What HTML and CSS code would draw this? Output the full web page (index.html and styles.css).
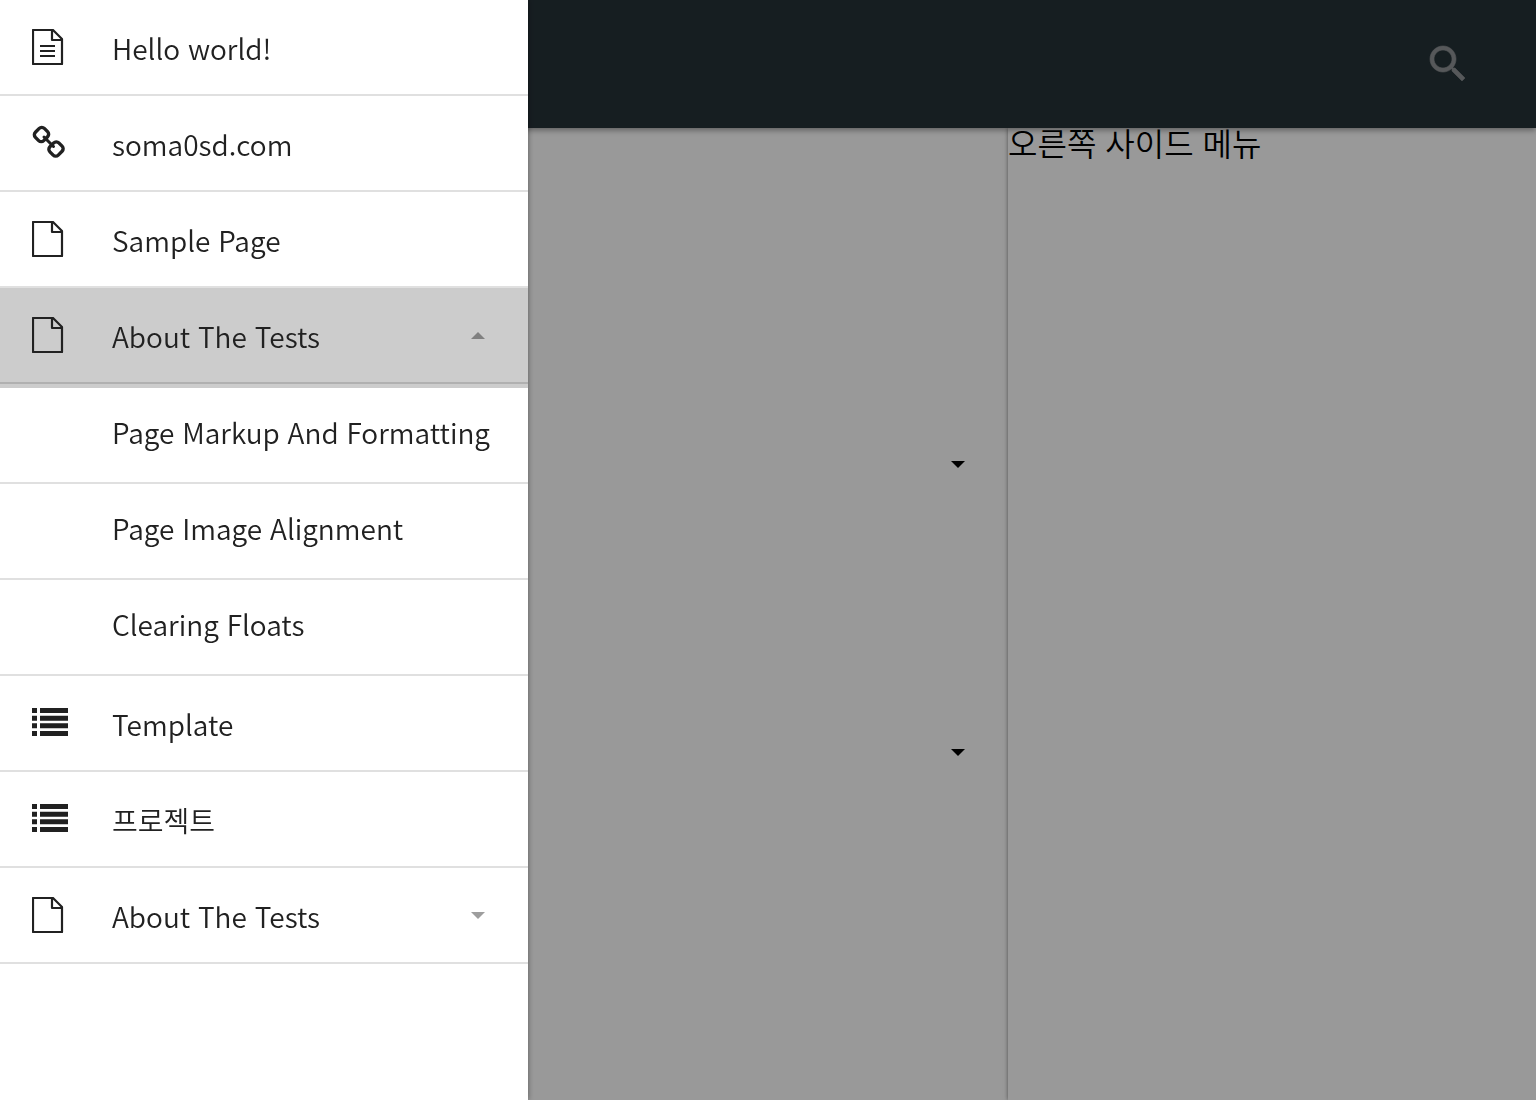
FILE: index.html
```
<!DOCTYPE html>
<html lang="ko">
<head>
  <meta charset="UTF-8">
  <meta name="viewport" content="width=device-width, initial-scale=1.0">
  <title>soma0sd</title>
  <link rel="stylesheet" href="styles.css">
</head>
<body>
  <!-- icon set -->
  <svg class="sprite" aria-hidden="true">
    <symbol id="icon-page" viewBox="0 0 36 36">
      <path d="M1 1h20l9 9v25H1z M20 1v10h10" fill="none" stroke="currentColor" stroke-width="2.2" stroke-linejoin="round"/>
    </symbol>
    <symbol id="icon-post" viewBox="0 0 36 36">
      <path d="M1 1h20l9 9v25H1z M20 1v10h10 M8 17h15 M8 22h15 M8 27h15" fill="none" stroke="currentColor" stroke-width="2.2" stroke-linejoin="round"/>
    </symbol>
    <symbol id="icon-link" viewBox="0 0 36 36">
      <g fill="none" stroke="currentColor" stroke-width="3.4">
        <rect x="3.200" y="3.600" width="12.600" height="11.800" rx="3.600" transform="rotate(-45 9.500 9.500)"/>
        <rect x="17.700" y="18.100" width="12.600" height="11.800" rx="3.600" transform="rotate(-45 24 24)"/>
        <path d="M12 12l9.500 9.500" stroke-width="3" stroke-linecap="round"/>
      </g>
    </symbol>
    <symbol id="icon-list" viewBox="0 0 36 36">
      <path d="M0 3h5v5H0z M8 3h28v5H8z M0 10.700h5v5H0z M8 10.700h28v5H8z M0 18.300h5v5H0z M8 18.300h28v5H8z M0 26h5v5H0z M8 26h28v5H8z" fill="currentColor"/>
    </symbol>
    <symbol id="icon-search" viewBox="0 0 24 24">
      <path d="M15.500 14h-.79l-.28-.27C15.410 12.590 16 11.110 16 9.500 16 5.910 13.090 3 9.500 3S3 5.910 3 9.500 5.910 16 9.500 16c1.610 0 3.090-.59 4.230-1.570l.27.28v.79l5 4.990L20.490 19l-4.990-5zm-6 0C7.010 14 5 11.990 5 9.500S7.010 5 9.500 5 14 7.010 14 9.500 11.990 14 9.500 14z" fill="currentColor" stroke="currentColor" stroke-width=".3"/>
    </symbol>
  </svg>

  <div class="page">
    <header class="top-bar">
      <button class="search-btn" aria-label="검색"><svg><use href="#icon-search"/></svg></button>
    </header>
    <div class="content">
      <main class="main">
        <button class="more-btn" aria-label="더 보기"><span class="caret"></span></button>
        <button class="more-btn" aria-label="더 보기"><span class="caret"></span></button>
      </main>
      <aside class="side-right">오른쪽 사이드 메뉴</aside>
    </div>
  </div>

  <div class="overlay"></div>

  <nav class="drawer">
    <ul class="menu">
      <li><a href="#"><svg class="icon"><use href="#icon-post"/></svg><span>Hello world!</span></a></li>
      <li><a href="#"><svg class="icon"><use href="#icon-link"/></svg><span>soma0sd.com</span></a></li>
      <li><a href="#"><svg class="icon"><use href="#icon-page"/></svg><span>Sample Page</span></a></li>
      <li class="open">
        <button class="toggle" aria-expanded="true"><svg class="icon"><use href="#icon-page"/></svg><span>About The Tests</span><i class="caret up"></i></button>
        <ul class="sub-menu">
          <li><a href="#">Page Markup And Formatting</a></li>
          <li><a href="#">Page Image Alignment</a></li>
          <li><a href="#">Clearing Floats</a></li>
        </ul>
      </li>
      <li><a href="#"><svg class="icon"><use href="#icon-list"/></svg><span>Template</span></a></li>
      <li><a href="#"><svg class="icon"><use href="#icon-list"/></svg><span>프로젝트</span></a></li>
      <li><button class="toggle" aria-expanded="false"><svg class="icon"><use href="#icon-page"/></svg><span>About The Tests</span><i class="caret"></i></button></li>
    </ul>
  </nav>
</body>
</html>
```
FILE: styles.css
```
* {
  box-sizing: border-box;
}

body {
  margin: 0;
  font-family: "Noto Sans CJK KR", sans-serif;
  font-weight: 350;
  font-size: 32px;
  line-height: 28px;
  color: #000;
  background: #fff;
}

button {
  font: inherit;
  color: inherit;
  background: none;
  border: none;
  padding: 0;
  cursor: pointer;
}

.sprite {
  position: absolute;
  width: 0;
  height: 0;
}

.page {
  display: flex;
  flex-direction: column;
  min-height: 100vh;
}

.top-bar {
  position: relative;
  z-index: 1;
  display: flex;
  align-items: center;
  justify-content: flex-end;
  height: 128px;
  padding: 0 64px;
  background: #263238;
  box-shadow: 0 2px 6px rgba(0, 0, 0, 0.4);
}

.search-btn {
  width: 48px;
  height: 48px;
  color: #8f9396;
}

.search-btn svg {
  display: block;
  width: 48px;
  height: 48px;
}

.content {
  display: flex;
  flex: 1;
}

.main {
  flex: 1;
  display: flex;
  flex-direction: column;
  align-items: flex-end;
  padding: 192px 0;
}

.more-btn {
  display: flex;
  align-items: center;
  justify-content: center;
  width: 100px;
  height: 288px;
}

.side-right {
  width: 528px;
  box-shadow: 0 0 4px rgba(0, 0, 0, 0.5);
}

.caret {
  border: 7px solid transparent;
  border-top-color: currentColor;
  border-bottom: none;
}

.caret.up {
  border-top: none;
  border-bottom: 7px solid currentColor;
}

.overlay {
  position: fixed;
  inset: 0;
  z-index: 2;
  background: rgba(0, 0, 0, 0.4);
}

/* left drawer */
.drawer {
  position: fixed;
  top: 0;
  bottom: 0;
  left: 0;
  z-index: 3;
  width: 528px;
  overflow-y: auto;
  background: #fff;
  box-shadow: 0 0 6px rgba(0, 0, 0, 0.4);
}

.menu,
.sub-menu {
  margin: 0;
  padding: 0;
  list-style: none;
}

.menu a,
.toggle {
  display: flex;
  align-items: center;
  width: 100%;
  height: 96px;
  padding: 0 40px 0 32px;
  border-bottom: 2px solid #e0e0e0;
  font-size: 28px;
  color: #212121;
  text-align: left;
  text-decoration: none;
}

.menu span {
  padding-top: 2px;
}

.icon {
  flex: none;
  width: 36px;
  height: 36px;
  margin-right: 44px;
}

.toggle .caret {
  margin-left: auto;
  margin-right: 3px;
  color: #9e9e9e;
}

.open > .toggle {
  background: #ccc;
  border-color: #b0b0b0;
}

.open > .toggle .caret {
  color: #808080;
}

.sub-menu {
  border-top: 4px solid #ccc;
}

.menu .sub-menu a {
  padding: 0 0 6px 112px;
}
```
